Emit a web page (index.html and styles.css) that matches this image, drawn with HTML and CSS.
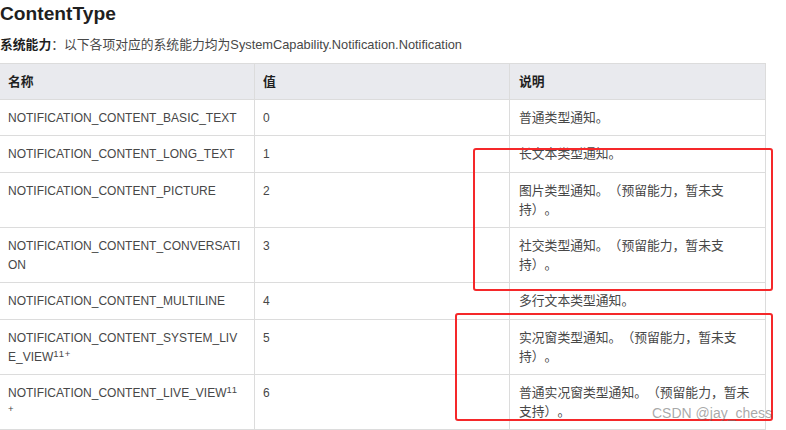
FILE: index.html
```html
<!DOCTYPE html>
<html lang="zh-CN">
<head>
<meta charset="utf-8">
<title>ContentType</title>
<link rel="stylesheet" href="styles.css">
</head>
<body>
<h2 class="title">ContentType</h2>
<p class="cap"><strong>系统能力</strong>：以下各项对应的系统能力均为SystemCapability.Notification.Notification</p>
<div class="table">
  <div class="cell c1 head">名称</div>
  <div class="cell c2 head">值</div>
  <div class="cell c3 head">说明</div>

  <div class="cell c1">NOTIFICATION_CONTENT_BASIC_TEXT</div>
  <div class="cell c2">0</div>
  <div class="cell c3">普通类型通知。</div>

  <div class="cell c1">NOTIFICATION_CONTENT_LONG_TEXT</div>
  <div class="cell c2">1</div>
  <div class="cell c3">长文本类型通知。</div>

  <div class="cell c1">NOTIFICATION_CONTENT_PICTURE</div>
  <div class="cell c2">2</div>
  <div class="cell c3">图片类型通知。（预留能力，暂未支持）。</div>

  <div class="cell c1">NOTIFICATION_CONTENT_CONVERSATION</div>
  <div class="cell c2">3</div>
  <div class="cell c3">社交类型通知。（预留能力，暂未支持）。</div>

  <div class="cell c1">NOTIFICATION_CONTENT_MULTILINE</div>
  <div class="cell c2">4</div>
  <div class="cell c3">多行文本类型通知。</div>

  <div class="cell c1">NOTIFICATION_CONTENT_SYSTEM_LIVE_VIEW<sup>11+</sup></div>
  <div class="cell c2">5</div>
  <div class="cell c3">实况窗类型通知。（预留能力，暂未支持）。</div>

  <div class="cell c1">NOTIFICATION_CONTENT_LIVE_VIEW<sup>11+</sup></div>
  <div class="cell c2">6</div>
  <div class="cell c3">普通实况窗类型通知。（预留能力，暂未支持）。</div>
</div>
<div class="mark mark-a"></div>
<div class="mark mark-b"></div>
<div class="watermark">CSDN @jay_chess</div>
</body>
</html>
```
FILE: styles.css
```css
html, body {
  margin: 0;
  padding: 0;
  background: #ffffff;
}
body {
  position: relative;
  font-family: "Liberation Sans", "Noto Sans CJK SC", sans-serif;
  color: #474747;
  text-spacing-trim: space-all;
}
.title {
  margin: 0;
  font-size: 19.2px;
  line-height: 28px;
  font-weight: 700;
  color: #1f1f1f;
}
.cap {
  margin: 7px 0 8px;
  font-size: 12.8px;
  line-height: 20px;
  color: #474747;
}
.cap strong {
  font-weight: 700;
  color: #1f1f1f;
}
.table {
  display: grid;
  grid-template-columns: 255px 255px 256px;
  width: 766px;
  border-top: 1px solid #dcdcdc;
}
.cell {
  box-sizing: border-box;
  border-right: 1px solid #dcdcdc;
  border-bottom: 1px solid #dcdcdc;
  padding: 8px 10px 8px 8px;
  line-height: 19.2px;
  font-size: 12.8px;
  text-spacing-trim: space-all;
}
.c1 {
  font-size: 12px;
  padding-top: 9px;
  padding-bottom: 7px;
  padding-right: 11px;
  word-break: break-all;
}
.c2 {
  font-size: 12px;
  padding-top: 9px;
  padding-bottom: 7px;
}
.c3 {
  padding-left: 9px;
}
.head {
  background: #e9eaee;
  font-size: 12.8px;
  font-weight: 700;
  color: #1f1f1f;
  padding-top: 8px;
  padding-bottom: 8px;
}
sup {
  font-size: 9.5px;
  line-height: 0;
  letter-spacing: 0.8px;
  vertical-align: 4px;
}
.mark {
  position: absolute;
  box-sizing: border-box;
  border: 2px solid #f5282a;
  border-radius: 3px;
}
.mark-a {
  left: 473px;
  top: 148px;
  width: 300px;
  height: 143px;
}
.mark-b {
  left: 455px;
  top: 313px;
  width: 318px;
  height: 108px;
}
.watermark {
  position: absolute;
  left: 652px;
  top: 404px;
  font-size: 14px;
  line-height: 18px;
  color: rgba(110, 110, 110, 0.6);
  white-space: nowrap;
}
```
